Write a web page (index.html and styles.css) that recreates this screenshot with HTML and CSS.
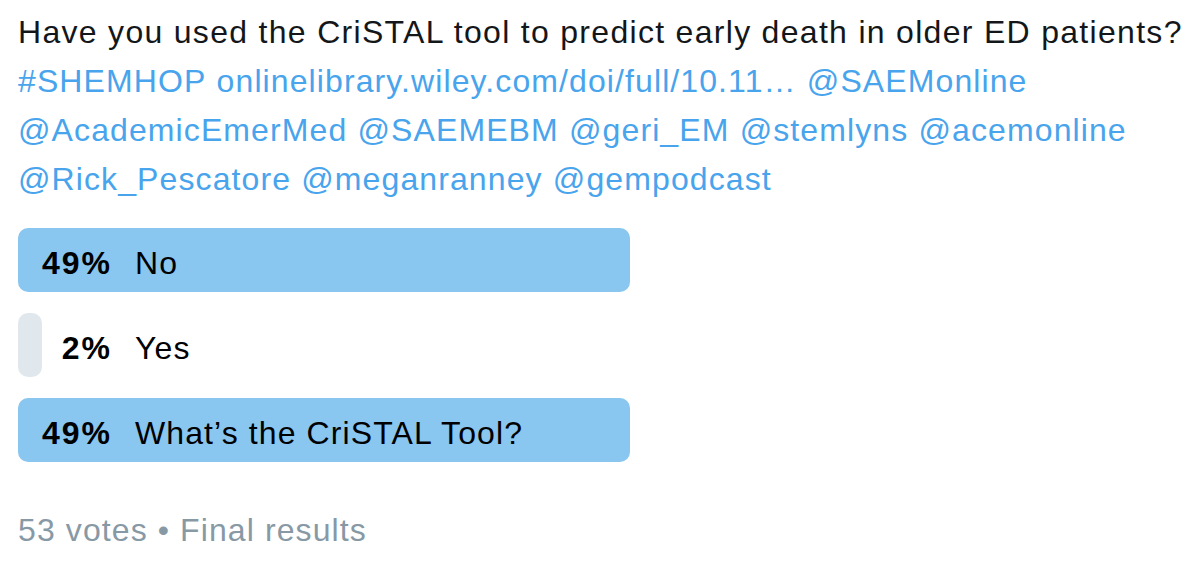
FILE: index.html
```html
<!DOCTYPE html>
<html lang="en">
<head>
    <meta charset="UTF-8">
    <meta name="viewport" content="width=device-width, initial-scale=1.0">
    <title>Poll</title>
    <link rel="stylesheet" href="styles.css">
</head>
<body>
    <div class="tweet">
      <p class="tweet-text">
        Have you used the CriSTAL tool to predict early death in older ED patients?<br>
        <a href="#">#SHEMHOP</a> <a href="#">onlinelibrary.wiley.com/doi/full/10.11…</a> <a href="#">@SAEMonline</a><br>
        <a href="#">@AcademicEmerMed</a> <a href="#">@SAEMEBM</a> <a href="#">@geri_EM</a> <a href="#">@stemlyns</a> <a href="#">@acemonline</a><br>
        <a href="#">@Rick_Pescatore</a> <a href="#">@meganranney</a> <a href="#">@gempodcast</a>
      </p>

      <!-- Poll -->
      <ul class="poll">
        <li class="poll-choice winner">
          <span class="poll-bar" style="width: 100%"></span>
          <span class="poll-pct">49%</span>
          <span class="poll-label">No</span>
        </li>
        <li class="poll-choice">
          <span class="poll-bar" style="width: 24px"></span>
          <span class="poll-pct">2%</span>
          <span class="poll-label">Yes</span>
        </li>
        <li class="poll-choice winner">
          <span class="poll-bar" style="width: 100%"></span>
          <span class="poll-pct">49%</span>
          <span class="poll-label">What’s the CriSTAL Tool?</span>
        </li>
      </ul>

      <div class="poll-footer">53 votes • Final results</div>
    </div>
</body>
</html>
```

FILE: styles.css
```css
html,
body {
  background: #fff;
}

body {
  font-family: "Liberation Sans", Arial, Helvetica, sans-serif;
  font-size: 32px;
  letter-spacing: 1.1px;
  margin: 0;
  padding: 8px 18px;
  color: #14171a;
}

.tweet-text {
  margin: 0;
  line-height: 49px;
  letter-spacing: 1.3px;
}

.tweet-text a {
  color: #48a4ec;
  text-decoration: none;
  letter-spacing: 1.1px;
}

.poll {
  list-style: none;
  margin: 24px 0 0;
  padding: 0;
  width: 612px;
  display: flex;
  flex-direction: column;
  gap: 21px;
}

.poll-choice {
  position: relative;
  display: flex;
  height: 64px;
  line-height: 58px;
  padding-top: 6px;
  box-sizing: border-box;
  color: #000;
}

.poll-bar {
  position: absolute;
  top: 0;
  left: 0;
  bottom: 0;
  background: #e1e8ed;
  border-radius: 10px;
}

.winner .poll-bar {
  background: #89c6f0;
}

.poll-pct {
  position: relative;
  width: 94px;
  text-align: right;
  font-weight: 700;
  letter-spacing: 2px;
}

.poll-label {
  position: relative;
  margin-left: 23px;
}

.poll-footer {
  margin-top: 44px;
  line-height: 49px;
  color: #8899a6;
}
```
